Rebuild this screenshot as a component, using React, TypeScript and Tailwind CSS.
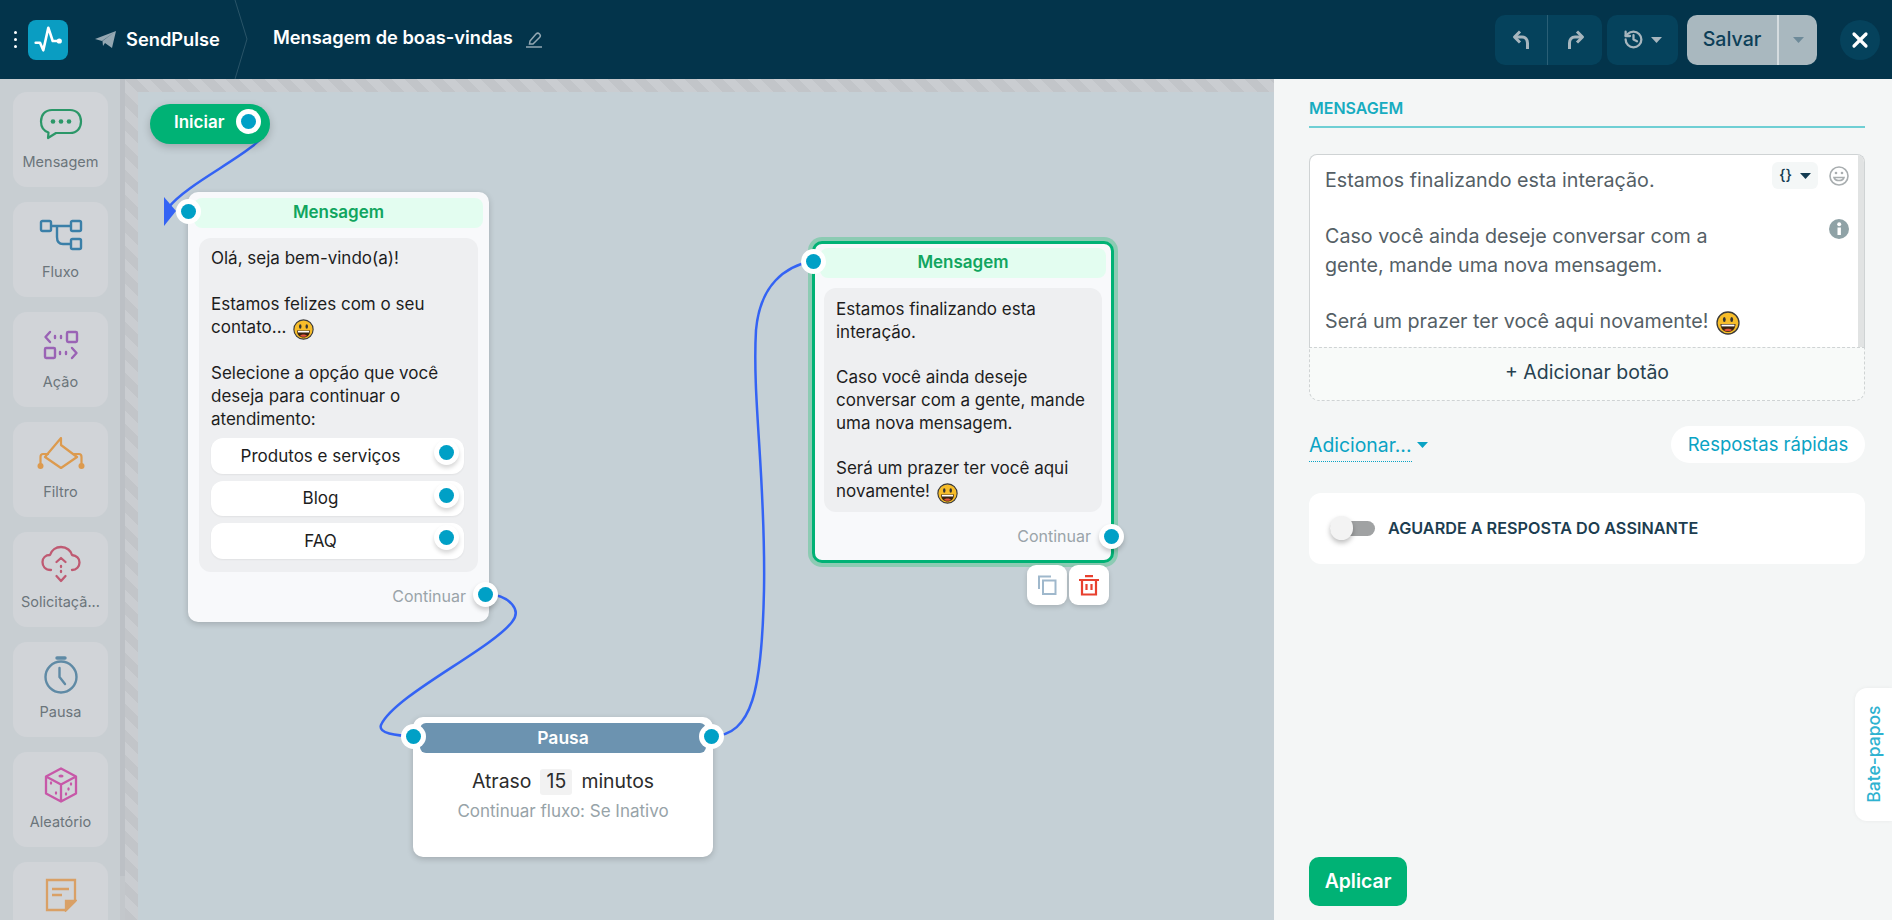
import React from "react";
import { History, X } from "lucide-react";

const Smiley = ({ s = 21 }: { s?: number }) => (
  <svg width={s} height={s} viewBox="0 0 24 24" className="inline-block ml-[2px] align-[-3px] -my-[4px]">
    <circle cx="12" cy="12" r="11" fill="#f7bd2a" stroke="#3a3a3a" strokeWidth="1.3" />
    <ellipse cx="8.3" cy="8.5" rx="1.4" ry="2.5" fill="#333" />
    <ellipse cx="15.7" cy="8.5" rx="1.4" ry="2.5" fill="#333" />
    <path d="M4.5 13 H19.5 C19.5 18 16 21 12 21 C8 21 4.5 18 4.5 13Z" fill="#3a2410" />
    <path d="M5.5 13.6 H18.5 V15.4 H5.5Z" fill="#fff" />
    <path d="M8 19 C10 17.3 14 17.3 16 19 C14.5 20.6 9.5 20.6 8 19Z" fill="#e5533c" />
  </svg>
);

const Caret = ({ c }: { c: string }) => (
  <svg width="11" height="6" viewBox="0 0 11 6"><path d="M0 0 H11 L5.5 6Z" fill={c} /></svg>
);

const Port = ({ className = "" }: { className?: string }) => (
  <div className={"absolute w-[25px] h-[25px] rounded-full bg-white flex items-center justify-center " + className}>
    <div className="w-[15px] h-[15px] rounded-full bg-[#00a0c6]" />
  </div>
);

const icons: Record<string, React.ReactNode> = {
  Mensagem: (
    <svg width="44" height="34" viewBox="0 0 44 34" fill="none">
      <path d="M13 2 H31 C38 2 42 7 42 13.5 C42 20 38 25 31 25 H17 L9 30 L9.5 24.5 C5 23 2 19 2 13.5 C2 7 6 2 13 2Z" stroke="#2b9768" strokeWidth="2.2" strokeLinejoin="round" />
      <circle cx="14" cy="13.5" r="2.3" fill="#2b9768" /><circle cx="22" cy="13.5" r="2.3" fill="#2b9768" /><circle cx="30" cy="13.5" r="2.3" fill="#2b9768" />
    </svg>
  ),
  Fluxo: (
    <svg width="44" height="32" viewBox="0 0 44 32" fill="none" stroke="#3a7fa8" strokeWidth="2.4">
      <rect x="2" y="2" width="10" height="10" rx="1.5" /><rect x="32" y="2" width="10" height="10" rx="1.5" /><rect x="32" y="20" width="10" height="10" rx="1.5" />
      <path d="M12 7 H32 M18 7 V18 C18 22 20 25 24 25 H32" />
    </svg>
  ),
  "Ação": (
    <svg width="36" height="32" viewBox="0 0 36 32" fill="none" stroke="#9a63b5" strokeWidth="2.4">
      <rect x="24" y="3" width="10" height="10" rx="1.2" /><rect x="2" y="19" width="10" height="10" rx="1.2" />
      <path d="M7 3 L2.5 8 L7 13 M29 19 L33.5 24 L29 29" strokeLinecap="round" strokeLinejoin="round" />
      <path d="M12 7 V9 M18 7 V9 M17 23 V25 M23 23 V25" strokeLinecap="round" />
    </svg>
  ),
  Filtro: (
    <svg width="50" height="36" viewBox="0 0 50 36" fill="none" stroke="#dc9a4e" strokeWidth="2.2" strokeLinejoin="round">
      <path d="M25 1 V8 L41 20 L25 31 L9 20 Z" />
      <path d="M13 17 H7 C5.5 17 4.5 18 4.5 20 V27 M37 17 H43 C44.5 17 45.5 18 45.5 20 V27" />
      <circle cx="4.5" cy="29" r="3" fill="#dc9a4e" stroke="none" /><circle cx="45.5" cy="29" r="3" fill="#dc9a4e" stroke="none" />
    </svg>
  ),
  "Solicitaçã...": (
    <svg width="40" height="40" viewBox="0 0 40 40" fill="none" stroke="#bf5a72" strokeWidth="2.3" strokeLinecap="round" strokeLinejoin="round">
      <path d="M10 25 C4 25 1.5 21 1.5 17 C1.5 13 4.5 10 9 10 C10.5 5 15 2 20 2 C26 2 30 6 31 10 C35.5 10.5 38.5 13.5 38.5 17.5 C38.5 21.5 35.5 25 31 25" />
      <path d="M15.5 17 L20 13 L24.5 17 M20 21 V22 M20 26 V27 M15.5 31 L20 36 L24.5 31" />
    </svg>
  ),
  Pausa: (
    <svg width="34" height="38" viewBox="0 0 34 38" fill="none" stroke="#5f8aa5" strokeWidth="2.4" strokeLinecap="round" strokeLinejoin="round">
      <circle cx="17" cy="21" r="15.5" />
      <path d="M13 2 H21" strokeWidth="3.4" />
      <path d="M15.5 12 V21 L21 28" />
    </svg>
  ),
  "Aleatório": (
    <svg width="34" height="36" viewBox="0 0 34 36" fill="none" stroke="#c758a8" strokeWidth="2.3" strokeLinejoin="round">
      <path d="M17 1.5 L32 9.5 V26.5 L17 34.5 L2 26.5 V9.5 Z M2 9.5 L17 17.5 L32 9.5 M17 17.5 V34.5" />
      <g fill="#c758a8" stroke="none">
        <ellipse cx="17" cy="9" rx="2.6" ry="1.5" /><ellipse cx="7" cy="16" rx="1.2" ry="1.8" /><ellipse cx="12" cy="26" rx="1.2" ry="1.8" /><ellipse cx="22" cy="27" rx="1.2" ry="1.8" /><ellipse cx="27" cy="17" rx="1.2" ry="1.8" /><ellipse cx="24.5" cy="22" rx="1.2" ry="1.8" />
      </g>
    </svg>
  ),
  Notas: (
    <svg width="32" height="34" viewBox="0 0 32 34" fill="none" stroke="#d9a066" strokeWidth="2.3">
      <path d="M2 2 H30 V23 L21 32 H2 Z" />
      <path d="M7 11 H24 M7 17 H17" strokeWidth="2.6" />
      <path d="M21 32 V23 H30 Z" fill="#d9a066" />
    </svg>
  ),
};

const Tool = ({ label, show = true }: { label: string; show?: boolean }) => (
  <div className="shrink-0 w-[95px] h-[95px] rounded-[14px] bg-[#d1d4d8] flex flex-col items-center pt-[5px]">
    <div className="h-[56px] flex items-center justify-center">{icons[label]}</div>
    {show && <div className="text-[14.5px] leading-[18px] text-[#6b757b] whitespace-nowrap">{label}</div>}
  </div>
);

const Choice = ({ t, h }: { t: string; h: string }) => (
  <div className={"relative rounded-[12px] bg-white shadow-[0_1px_2px_rgba(0,0,0,0.06)] flex items-center justify-center pr-[34px] text-[#1d1d1d] " + h}>
    {t}
    <div className="absolute right-[5px] top-[2px] w-[25px] h-[25px] rounded-full bg-white shadow-[0_3px_4px_rgba(0,0,0,0.16)] flex items-center justify-center">
      <div className="w-[15px] h-[15px] rounded-full bg-[#00a0c6]" />
    </div>
  </div>
);

export default function App() {
  return (
    <div className="w-[1892px] h-[920px] overflow-hidden flex flex-col font-['Inter',sans-serif]">
      {/* header */}
      <header className="h-[79px] shrink-0 bg-[#03344b] flex items-center relative">
        <div className="ml-[14px] w-[3px] flex flex-col gap-[4px]">
          <i className="block w-[3px] h-[3px] bg-white rounded-full" />
          <i className="block w-[3px] h-[3px] bg-white rounded-full" />
          <i className="block w-[3px] h-[3px] bg-white rounded-full" />
        </div>
        <div className="ml-[11px] w-[40px] h-[40px] rounded-[8px] bg-[#0a9dc2] flex items-center justify-center">
          <svg width="40" height="40" viewBox="0 0 40 40" fill="none" stroke="#fff" strokeWidth="2.6" strokeLinejoin="round" strokeLinecap="round">
            <path d="M7.7 22.7 H12 L15.3 30.3 L20.3 7.7 L24.7 21 H31.3" />
            <circle cx="31.3" cy="21" r="2.6" fill="#fff" stroke="none" />
          </svg>
        </div>
        <svg className="ml-[27px]" width="21" height="17" viewBox="0 0 21 17"><path d="M21 0 L17 17 L10 12 L8 15 L7.5 10 Z M21 0 L0 8 L7 10 Z" fill="#94a7b2" /></svg>
        <span className="ml-[10px] text-[18.3px] font-semibold text-white">SendPulse</span>
        <svg className="absolute left-[234px] top-0" width="15" height="79" viewBox="0 0 15 79" fill="none"><path d="M1 0 L13 39 L1 79" stroke="#2a5468" strokeWidth="1" /></svg>
        <span className="ml-[53px] -mt-[4px] text-[18.3px] font-semibold text-white whitespace-nowrap">Mensagem de boas-vindas</span>
        <svg className="ml-[13px] -mt-[1px]" width="16" height="17" viewBox="0 0 16 17" fill="none" stroke="#93a7b2" strokeWidth="1.5">
          <path d="M4 10 L10 3 C11 2 12.5 2 13.5 3 C14.5 4 14.5 5.5 13.5 6.5 L7 13 H3.5 Z" /><path d="M0 16 H16" />
        </svg>
        <div className="ml-auto flex items-center">
          <div className="w-[107px] h-[50px] rounded-[10px] bg-[#05425c] flex items-center">
            <div className="w-[53px] h-full flex items-center justify-center border-r border-[#2a5f76]">
              <svg width="19" height="20" viewBox="0 0 19 20" fill="none" stroke="#a7b6be" strokeWidth="3"><path d="M3.5 7 H10 C13.5 7 15.5 9.5 15.5 13 V19" /><path d="M8 1.5 L2.5 7 L8 12.5" strokeLinejoin="round" /></svg>
            </div>
            <div className="flex-1 flex items-center justify-center">
              <svg width="19" height="20" viewBox="0 0 19 20" fill="none" stroke="#a7b6be" strokeWidth="3"><path d="M3.5 19 V13 C3.5 9.5 5.5 7 9 7 H15.5" /><path d="M11 1.5 L16.5 7 L11 12.5" strokeLinejoin="round" /></svg>
            </div>
          </div>
          <div className="ml-[5px] w-[71px] h-[50px] rounded-[10px] bg-[#05425c] flex items-center justify-center gap-[7px]">
            <History size={21} strokeWidth={2.6} color="#a7b6be" />
            <Caret c="#a7b6be" />
          </div>
          <div className="ml-[9px] w-[130px] h-[50px] rounded-[10px] bg-[#a9b8bf] flex items-center">
            <div className="w-[92px] h-full flex items-center justify-center border-r-2 border-[#d5dcdf] text-[19.6px] font-medium text-[#0d3f58]">Salvar</div>
            <div className="flex-1 flex items-center justify-center"><Caret c="#6d8a99" /></div>
          </div>
          <div className="ml-[23px] mr-[12px] w-[40px] h-[40px] rounded-full bg-[#05425c] flex items-center justify-center">
            <X size={24} strokeWidth={3.2} color="#fff" />
          </div>
        </div>
      </header>

      <div className="flex-1 min-h-0 flex">
        {/* tools */}
        <aside className="w-[120px] shrink-0 bg-[#c8ced2] overflow-hidden flex flex-col items-start gap-[15px] pt-[13px] pl-[13px]">
          <Tool label="Mensagem" /><Tool label="Fluxo" /><Tool label="Ação" /><Tool label="Filtro" />
          <Tool label="Solicitaçã..." /><Tool label="Pausa" /><Tool label="Aleatório" /><Tool label="Notas" show={false} />
        </aside>
        <div className="w-[5px] shrink-0 flex flex-col bg-[#c3c7cb]">
          <div className="h-[797px] bg-[#bcc0c5]" />
        </div>
        {/* canvas */}
        <main className="w-[1149px] shrink-0 pt-[13px] pl-[13px] flex bg-[repeating-linear-gradient(45deg,#c2c5c9_0,#c2c5c9_9px,#cacdd1_9px,#cacdd1_18px)]">
          <div className="relative flex-1 bg-[#c5d0d6] overflow-hidden">
            <svg className="absolute left-[-138px] top-[-92px] pointer-events-none" width="1892" height="920" fill="none" stroke="#3463f4" strokeWidth="2.5">
              <path d="M268 128 C262 150 190 180 168 208" />
              <path d="M176 211 L164 197 V226 Z" fill="#3463f4" stroke="none" />
              <path d="M488 594 C510 596 522 610 512 622 C490 650 395 695 381 725 C378 733 395 736 414 736" />
              <path d="M712 736 C752 736 762 690 764 590 C766 480 752 400 756 330 C760 285 785 266 813 261" />
            </svg>

            {/* start */}
            <div className="absolute left-[12px] top-[12px] w-[120px] h-[40px] rounded-[20px] bg-[#00b275] shadow-[0_3px_8px_rgba(0,0,0,0.2)] flex items-center pl-[24px] text-[17px] font-semibold text-white">
              <span className="-mt-[3px]">Iniciar</span>
              <Port className="left-[86px] top-[5px]" />
            </div>

            {/* message 1 */}
            <div className="absolute left-[50px] top-[100px] w-[301px] h-[430px] rounded-[10px] bg-[#f8f9fb] shadow-[0_2px_6px_rgba(0,0,0,0.18)] text-[17px] leading-[23px]">
              <Port className="left-[-12px] top-[7px]" />
              <div className="mx-[6px] mt-[6px] h-[30px] pb-[1px] rounded-[8px] bg-[#e3fdf0] flex items-center justify-center font-semibold text-[#11a55f]">Mensagem</div>
              <div className="mx-[11px] mt-[10px] h-[334px] rounded-[12px] bg-[#eeeff1] pt-[9px] pl-[12px] pr-[14px] text-[#1d1d1d] whitespace-nowrap">
                Olá, seja bem-vindo(a)!<br /><br />Estamos felizes com o seu<br />contato... <Smiley /><br /><br />Selecione a opção que você<br />deseja para continuar o<br />atendimento:
                <div className="mt-[7px] flex flex-col gap-[7px]">
                  <Choice t="Produtos e serviços" h="h-[36px]" />
                  <Choice t="Blog" h="h-[35px]" />
                  <Choice t="FAQ" h="h-[36px]" />
                </div>
              </div>
              <div className="mt-[13px] h-[24px] pr-[23px] text-right text-[16px] text-[#9aa4a9]">Continuar</div>
              <div className="absolute right-[-9px] top-[390px] w-[25px] h-[25px] rounded-full bg-white shadow-[0_3px_5px_rgba(0,0,0,0.2)] flex items-center justify-center"><div className="w-[15px] h-[15px] rounded-full bg-[#00a0c6]" /></div>
            </div>

            {/* pause */}
            <div className="absolute left-[275px] top-[625px] w-[300px] h-[140px] rounded-[10px] bg-white shadow-[0_2px_6px_rgba(0,0,0,0.18)]">
              <div className="mx-[7px] mt-[6px] h-[30px] rounded-[6px] bg-[#6c93b0] flex items-center justify-center text-[17.5px] font-semibold text-white">Pausa</div>
              <Port className="left-[-12px] top-[7px]" />
              <Port className="right-[-11px] top-[7px]" />
              <div className="mt-[16px] h-[26px] flex items-center justify-center text-[19.4px] text-[#2c2c2c]">
                Atraso
                <span className="mx-[9px] w-[32px] h-[26px] rounded-[3px] bg-[#f2f2f2] flex items-center justify-center">15</span>
                minutos
              </div>
              <div className="mt-[4px] text-center text-[17px] leading-[24px] text-[#97a3a8]">Continuar fluxo: Se Inativo</div>
            </div>

            {/* message 2 */}
            <div className="absolute left-[674px] top-[149px] w-[302px] h-[322px] rounded-[10px] border-[3px] border-[#00b275] bg-[#f8f9fb] ring-[4px] ring-[#8ccbb3] text-[17px] leading-[22.7px]">
              <div className="mx-[5px] mt-[4px] h-[30px] pb-[1px] rounded-[8px] bg-[#e3fdf0] flex items-center justify-center font-semibold text-[#11a55f]">Mensagem</div>
              <div className="mx-[9px] mt-[10px] h-[224px] rounded-[12px] bg-[#eeeff1] pt-[10px] px-[12px] text-[#1d1d1d] whitespace-nowrap">
                Estamos finalizando esta<br />interação.<br /><br />Caso você ainda deseje<br />conversar com a gente, mande<br />uma nova mensagem.<br /><br />Será um prazer ter você aqui<br />novamente! <Smiley />
              </div>
              <div className="mt-[13px] h-[24px] pr-[20px] text-right text-[16px] text-[#9aa4a9]">Continuar</div>
              <Port className="left-[-14px] top-[5px]" />
              <div className="absolute right-[-13px] top-[280px] w-[25px] h-[25px] rounded-full bg-white shadow-[0_3px_5px_rgba(0,0,0,0.2)] flex items-center justify-center"><div className="w-[15px] h-[15px] rounded-full bg-[#00a0c6]" /></div>
            </div>

            {/* node actions */}
            <div className="absolute left-[889px] top-[473px] flex gap-[2px]">
              <div className="w-[40px] h-[40px] rounded-[9px] bg-white shadow-[0_2px_5px_rgba(0,0,0,0.15)] flex items-center justify-center">
                <svg width="20" height="20" viewBox="0 0 20 20" fill="none" stroke="#9fb8cc" strokeWidth="2"><path d="M14 1.5 H2 V14" /><rect x="6" y="5.5" width="12.5" height="13.5" /></svg>
              </div>
              <div className="w-[40px] h-[40px] rounded-[9px] bg-white shadow-[0_2px_5px_rgba(0,0,0,0.15)] flex items-center justify-center">
                <svg width="20" height="21" viewBox="0 0 20 21" fill="none" stroke="#e8412f" strokeWidth="2.2"><path d="M0 5 H20 M6 1.2 H14" /><path d="M3 5 V19.5 H17 V5" /><path d="M7.5 9 V15 M12.5 9 V15" /></svg>
              </div>
            </div>
          </div>
        </main>

        {/* settings */}
        <section className="relative flex-1 bg-[#f4f6f6] pl-[35px] pr-[27px] flex flex-col">
          <div className="h-[49px] border-b-2 border-[#6fcfd4] flex items-end pb-[8px] text-[16px] leading-[20px] font-semibold text-[#17acc0]">MENSAGEM</div>
          <div className="relative mt-[26px] h-[193px] rounded-t-[8px] border border-b-0 border-[#cfd3d4] bg-white overflow-hidden pl-[15px] pt-[11px] text-[19.7px] leading-[28.2px] text-[#555f66] whitespace-nowrap">
            Estamos finalizando esta interação.<br /><br />Caso você ainda deseje conversar com a<br />gente, mande uma nova mensagem.<br /><br />Será um prazer ter você aqui novamente! <Smiley s={24} />
            <div className="absolute right-0 top-0 bottom-0 w-[6px] bg-[#e1e3e3]" />
            <div className="absolute left-[462px] top-[7px] w-[46px] h-[27px] rounded-[6px] bg-[#f4f7f7] flex items-center justify-center gap-[8px] text-[15px] font-medium text-[#143c52]">
              {"{}"}<Caret c="#143c52" />
            </div>
            <svg className="absolute left-[519px] top-[11px]" width="20" height="20" viewBox="0 0 20 20" fill="none" stroke="#a9aeb0" strokeWidth="1.6">
              <circle cx="10" cy="10" r="9" /><path d="M5 11.5 C6 15.5 14 15.5 15 11.5 Z" /><circle cx="7" cy="7" r="1.3" fill="#a9aeb0" stroke="none" /><circle cx="13" cy="7" r="1.3" fill="#a9aeb0" stroke="none" />
            </svg>
            <svg className="absolute left-[519px] top-[64px]" width="20" height="20" viewBox="0 0 20 20"><circle cx="10" cy="10" r="10" fill="#8fa2a6" /><rect x="8.5" y="8.5" width="3.4" height="7.5" fill="#fff" /><circle cx="10.2" cy="5.3" r="2" fill="#fff" /></svg>
          </div>
          <div className="h-[54px] rounded-b-[10px] border border-dashed border-[#cfd3d4] bg-[#f8faf9] flex items-center justify-center pb-[3px] text-[19.5px] text-[#274150]">+ Adicionar botão</div>
          <div className="mt-[25px] h-[37px] flex items-center justify-between">
            <div className="flex items-center gap-[5px] text-[19.4px] text-[#0aa3c4]">
              <span className="h-[34px] mt-[1px] pt-[3px] border-b border-dotted border-[#0aa3c4] leading-[28px]">Adicionar...</span>
              <Caret c="#0aa3c4" />
            </div>
            <div className="w-[194px] h-[37px] rounded-full bg-white flex items-center justify-center text-[18.5px] text-[#0aa3c4]">Respostas rápidas</div>
          </div>
          <div className="mt-[30px] h-[71px] rounded-[12px] bg-white flex items-center pl-[21px] gap-[13px]">
            <div className="relative w-[45px] h-[15px] rounded-full bg-[#a0a2a3]">
              <div className="absolute left-0 top-[-5px] w-[23px] h-[24px] rounded-full bg-[#f3f3f3] shadow-[0_3px_5px_rgba(0,0,0,0.25)]" />
            </div>
            <span className="text-[16.2px] font-semibold text-[#1c3d50]">AGUARDE A RESPOSTA DO ASSINANTE</span>
          </div>
          <button className="mt-auto mb-[14px] w-[98px] h-[49px] rounded-[10px] bg-[#00b275] text-[19.4px] font-semibold text-white">Aplicar</button>
          <div className="absolute right-0 top-[609px] w-[37px] h-[133px] rounded-l-[12px] bg-white shadow-[0_0_4px_rgba(0,0,0,0.05)] flex items-center justify-center">
            <span className="-rotate-90 whitespace-nowrap text-[17.5px] font-medium text-[#2eb2d0]">Bate-papos</span>
          </div>
        </section>
      </div>
    </div>
  );
}
